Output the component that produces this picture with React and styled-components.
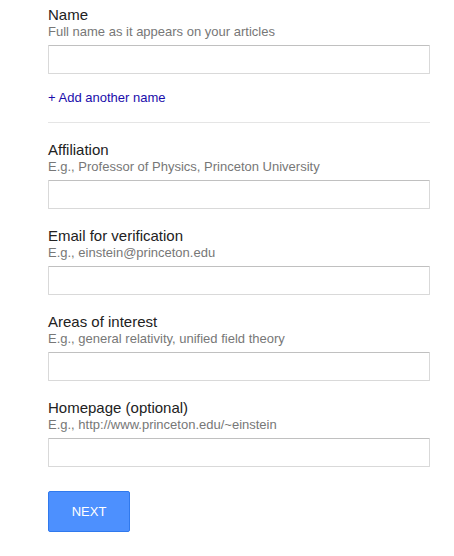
import styled, { createGlobalStyle } from "styled-components";

const GlobalStyle = createGlobalStyle`
  body {
    margin: 0;
    background: #fff;
    font-family: Arial, "Liberation Sans", sans-serif;
  }
`;

const Form = styled.form`
  width: 382px;
  padding: 5px 0 0 48px;
`;

const Field = styled.div`
  display: flex;
  flex-direction: column;
  margin-bottom: ${(p) => p.$after ?? 17}px;
`;

const Label = styled.label`
  font-size: 15px;
  line-height: 19px;
  color: #222;
`;

const Hint = styled.div`
  font-size: 13px;
  line-height: 16px;
  color: #777;
  margin-bottom: 5px;
`;

const Input = styled.input`
  box-sizing: border-box;
  width: 100%;
  height: 29px;
  border: 1px solid #d9d9d9;
  border-top-color: #c0c0c0;
  border-radius: 1px;
  padding: 0 8px;
  font-size: 13px;
  font-family: inherit;
  outline: none;
`;

const AddLink = styled.a`
  display: block;
  margin-top: 16px;
  font-size: 13px;
  line-height: 16px;
  color: #1a0dab;
  text-decoration: none;
  cursor: pointer;
`;

const Divider = styled.hr`
  border: none;
  border-top: 1px solid #e5e5e5;
  margin: 16px 0 17px;
`;

const NextButton = styled.button`
  width: 82px;
  height: 41px;
  background: #4d90fe;
  border: 1px solid #3079ed;
  border-radius: 2px;
  color: #fff;
  font-family: inherit;
  font-size: 13px;
  cursor: pointer;
`;

const fields = [
  { label: "Affiliation", hint: "E.g., Professor of Physics, Princeton University" },
  { label: "Email for verification", hint: "E.g., einstein@princeton.edu" },
  { label: "Areas of interest", hint: "E.g., general relativity, unified field theory" },
  { label: "Homepage (optional)", hint: "E.g., http://www.princeton.edu/~einstein" },
];

export default function App() {
  return (
    <>
      <GlobalStyle />
      <Form onSubmit={(e) => e.preventDefault()}>
        <Field $after={0}>
          <Label>Name</Label>
          <Hint>Full name as it appears on your articles</Hint>
          <Input type="text" />
        </Field>
        <AddLink>+ Add another name</AddLink>
        <Divider />
        {fields.map((f, i) => (
          <Field key={f.label} $after={i === fields.length - 1 ? 24 : 17}>
            <Label>{f.label}</Label>
            <Hint>{f.hint}</Hint>
            <Input type="text" />
          </Field>
        ))}
        <NextButton type="submit">NEXT</NextButton>
      </Form>
    </>
  );
}
